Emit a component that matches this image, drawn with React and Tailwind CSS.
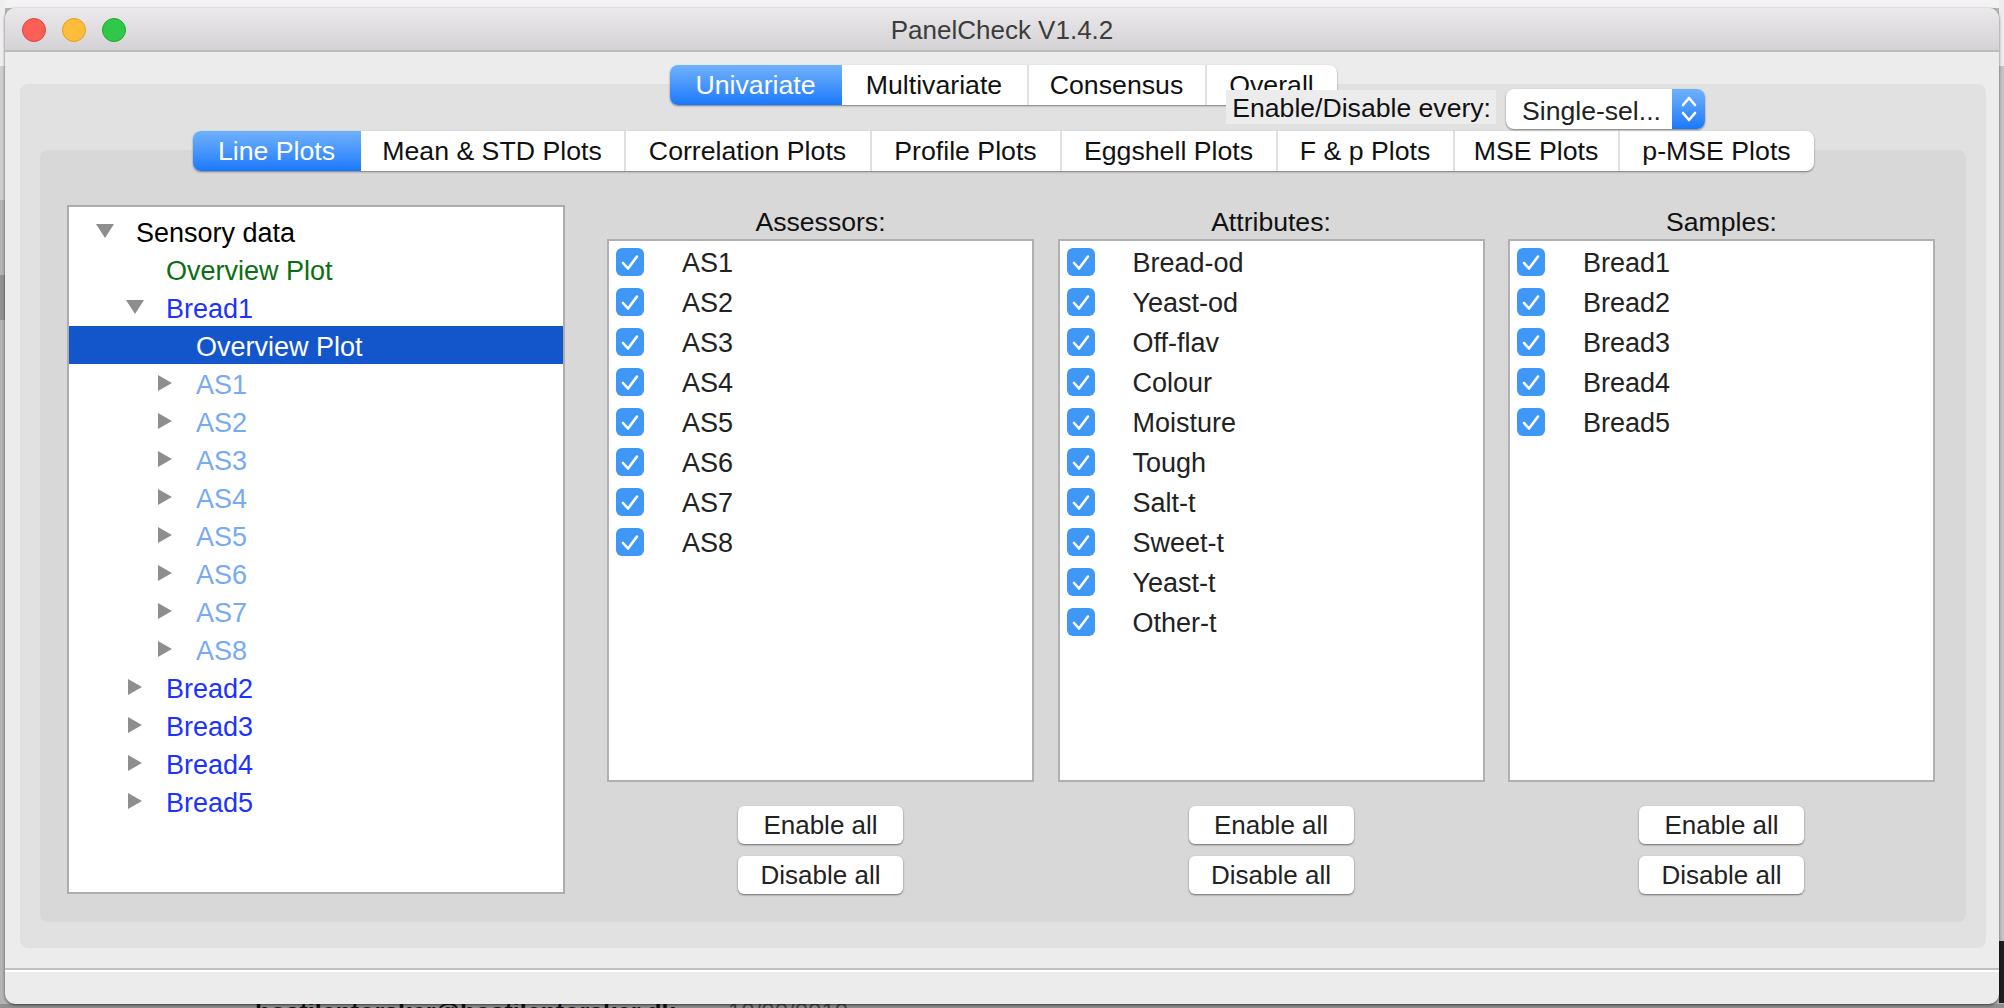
const assessors = ["AS1", "AS2", "AS3", "AS4", "AS5", "AS6", "AS7", "AS8"];
const attributes = ["Bread-od", "Yeast-od", "Off-flav", "Colour", "Moisture", "Tough", "Salt-t", "Sweet-t", "Yeast-t", "Other-t"];
const samples = ["Bread1", "Bread2", "Bread3", "Bread4", "Bread5"];

const topTabs = [
  { label: "Univariate", width: "w-[172px]", active: true },
  { label: "Multivariate", width: "w-[185px]" },
  { label: "Consensus", width: "w-[178px]" },
  { label: "Overall", width: "w-[132px]" },
];

const subTabs = [
  { label: "Line Plots", width: "w-[168px]", active: true },
  { label: "Mean & STD Plots", width: "w-[263px]" },
  { label: "Correlation Plots", width: "w-[246px]" },
  { label: "Profile Plots", width: "w-[190px]" },
  { label: "Eggshell Plots", width: "w-[216px]" },
  { label: "F & p Plots", width: "w-[177px]" },
  { label: "MSE Plots", width: "w-[165px]" },
  { label: "p-MSE Plots", width: "w-[196px]" },
];

const depthClass = ["pl-[27px]", "pl-[57px]", "pl-[87px]"];

const treeRows = [
  { label: "Sensory data", depth: 0, arrow: "down", color: "text-black" },
  { label: "Overview Plot", depth: 1, color: "text-[#0b6e12]" },
  { label: "Bread1", depth: 1, arrow: "down", color: "text-[#1c33ff]" },
  { label: "Overview Plot", depth: 2, selected: true, color: "text-white" },
  ...assessors.map((label) => ({ label, depth: 2, arrow: "right", color: "text-[#78aaf2]" })),
  ...["Bread2", "Bread3", "Bread4", "Bread5"].map((label) => ({ label, depth: 1, arrow: "right", color: "text-[#1c33ff]" })),
];

function Arrow({ dir }) {
  if (dir === "down") {
    return (
      <svg width="18" height="14" viewBox="0 0 18 14" className="-mt-[2px]">
        <polygon points="0,0 18,0 9,14" fill="#8e8e8e" />
      </svg>
    );
  }
  if (dir === "right") {
    return (
      <svg width="14" height="16" viewBox="0 0 14 16" className="ml-[2px] -mt-[2px]">
        <polygon points="0,0 14,8 0,16" fill="#8e8e8e" />
      </svg>
    );
  }
  return null;
}

function TabBar({ tabs }) {
  return (
    <div className="relative z-10 flex h-[40px] justify-center">
      <div className="flex rounded-[8px] bg-white text-[26.7px] shadow-[0_1px_2px_rgba(0,0,0,0.45)]">
        {tabs.map((tab, i) => (
          <div
            key={tab.label}
            className={
              tab.width +
              " flex items-center justify-center " +
              (tab.active
                ? "rounded-l-[8px] bg-gradient-to-b from-[#6fb1fb] to-[#1778fc] text-white"
                : "text-[#111111] " + (i > 1 ? "border-l-2 border-[#e0e0e0]" : ""))
            }
          >
            {tab.label}
          </div>
        ))}
      </div>
    </div>
  );
}

function Checkbox() {
  return (
    <span className="flex h-[28px] w-[28px] shrink-0 items-center justify-center rounded-[6px] bg-[#3f97f6]">
      <svg width="28" height="28" viewBox="0 0 28 28" fill="none">
        <path d="M7 15 L12 20.5 L21 8.5" stroke="white" strokeWidth="2.6" strokeLinecap="round" strokeLinejoin="round" />
      </svg>
    </span>
  );
}

function PushButton({ children }) {
  return (
    <div className="flex h-[38px] w-[165px] items-center justify-center rounded-[6px] bg-white text-[26px] text-[#222222] shadow-[0_1px_2px_rgba(0,0,0,0.5)]">
      {children}
    </div>
  );
}

function CheckColumn({ title, items }) {
  return (
    <div className="flex w-[427px] flex-col items-center">
      <div className="flex h-[34px] items-center pt-[2px] text-[26.6px] text-[#111111]">{title}</div>
      <div className="h-[543px] w-full border-2 border-[#b0b0b0] bg-white pl-[7px] pt-[1px] text-[27px]">
        {items.map((item) => (
          <div key={item} className="flex h-[40px] items-center gap-[38px] text-[#222222]">
            <Checkbox />
            <span className="mt-[2px]">{item}</span>
          </div>
        ))}
      </div>
      <div className="mt-[24px] flex flex-col items-center gap-[12px]">
        <PushButton>Enable all</PushButton>
        <PushButton>Disable all</PushButton>
      </div>
    </div>
  );
}

export default function App() {
  return (
    <div className="relative h-[1008px] w-[2004px] overflow-hidden bg-[#b4b4b4] font-['Liberation_Sans',Arial,sans-serif] text-[26.6px]">
      {/* desktop stuff behind the window */}
      <div className="absolute left-0 top-0 h-[8px] w-full bg-[#f3f3f3]" />
      <div className="absolute left-0 top-0 h-[66px] w-[5px] bg-[#eeeeee]" />
      <div className="absolute left-0 top-[66px] h-[134px] w-[5px] bg-[#cfcfcf]" />
      <div className="absolute left-0 top-[275px] h-[45px] w-[5px] bg-[#929292]" />
      <div className="absolute right-0 top-0 h-[66px] w-[5px] bg-[#ededed]" />
      <div className="absolute right-0 top-[66px] h-[875px] w-[5px] bg-[#c2c2c2]" />
      <div className="absolute right-0 top-[941px] h-[62px] w-[5px] bg-[#1e1e1e]" />
      <div className="absolute bottom-0 left-0 h-[4px] w-full bg-[#8f8f8f]" />
      <div className="absolute left-[255px] top-[1000px] text-[25px] font-bold leading-[24px] text-[#111111]">hostilentorsker@hostilentorsker.dk</div>
      <div className="absolute left-[728px] top-[1000px] text-[24px] leading-[24px] text-[#444444]">10/00/0010</div>

      <div className="relative ml-[5px] mt-[8px] flex h-[996px] w-[1994px] flex-col overflow-hidden rounded-[10px] bg-[#ececec] shadow-[0_1px_3px_rgba(0,0,0,0.6)]">
        <div className="relative flex h-[44px] shrink-0 items-center justify-center border-b-2 border-[#bdbbbd] bg-gradient-to-b from-[#ebe9eb] to-[#d4d2d4] pt-[3px] text-[26px] text-[#3c3c3c]">
          <div className="absolute left-[17px] top-[10px] flex gap-[16px]">
            <span className="h-[24px] w-[24px] rounded-full border border-[#e0443e] bg-[#fc5e58]" />
            <span className="h-[24px] w-[24px] rounded-full border border-[#dea123] bg-[#fdbc3a]" />
            <span className="h-[24px] w-[24px] rounded-full border border-[#1aab29] bg-[#31c748]" />
          </div>
          PanelCheck V1.4.2
        </div>

        <div className="relative flex h-[916px] shrink-0 flex-col pl-[15px] pr-[13px] pt-[13px]">
          <TabBar tabs={topTabs} />

          {/* this label and combo sit on top of the Overall tab in the app */}
          <div className="absolute left-[1221px] top-[38px] z-20 flex h-[34px] w-[270px] items-center justify-end bg-[#ececec] pr-[5px] pt-[4px] text-[#111111]">
            Enable/Disable every:
          </div>
          <div className="absolute left-[1501px] top-[37px] z-20 flex h-[40px] w-[199px] rounded-[8px] bg-white shadow-[0_1px_2px_rgba(0,0,0,0.45)]">
            <span className="flex flex-1 items-center pl-[16px] pt-[6px] text-[#222222]">Single-sel...</span>
            <span className="flex w-[33px] items-center justify-center rounded-r-[8px] bg-gradient-to-b from-[#6fb1fb] to-[#1778fc]">
              <svg width="18" height="30" viewBox="0 0 18 30" fill="none" stroke="white" strokeWidth="2.6" strokeLinecap="round" strokeLinejoin="round">
                <path d="M3 11 L9 4 L15 11" />
                <path d="M3 19 L9 26 L15 19" />
              </svg>
            </span>
          </div>

          <div className="-mt-[21px] h-[864px] rounded-[8px] bg-[#e1e1e1] px-[20px] pt-[47px]">
            <TabBar tabs={subTabs} />
            <div className="-mt-[21px] flex h-[772px] gap-[42px] rounded-[8px] bg-[#d8d8d8] pl-[27px] pt-[55px]">
              <div className="h-[689px] w-[498px] shrink-0 border-2 border-[#adadad] bg-white pt-[5px] text-[27px]">
                {treeRows.map((row, i) => (
                  <div
                    key={i}
                    className={
                      "flex h-[38px] items-center pt-[2px] " +
                      depthClass[row.depth] +
                      " " +
                      row.color +
                      (row.selected ? " bg-[#1356cc]" : "")
                    }
                  >
                    <span className="flex w-[40px] shrink-0 items-center">
                      <Arrow dir={row.arrow} />
                    </span>
                    <span className="mt-[2px]">{row.label}</span>
                  </div>
                ))}
              </div>
              <div className="flex gap-[23.5px]">
                <CheckColumn title="Assessors:" items={assessors} />
                <CheckColumn title="Attributes:" items={attributes} />
                <CheckColumn title="Samples:" items={samples} />
              </div>
            </div>
          </div>
        </div>

        <div className="flex-1 border-t-2 border-[#c0c0c0] shadow-[inset_0_2px_0_#ffffff]" />
      </div>
    </div>
  );
}
